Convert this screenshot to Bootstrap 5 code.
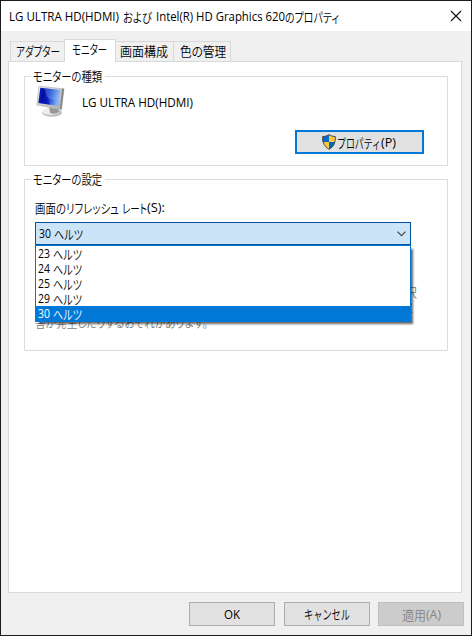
<!DOCTYPE html>
<html lang="ja">
<head>
<meta charset="utf-8">
<meta name="viewport" content="width=device-width, initial-scale=1">
<title>モニターのプロパティ</title>
<link href="https://cdn.jsdelivr.net/npm/bootstrap@5.3.0/dist/css/bootstrap.min.css" rel="stylesheet">
<style>
body{font:12px/15px "Open Sans","Noto Sans CJK JP",sans-serif;font-feature-settings:"palt";color:#000;background:#1c1a1d;overflow:hidden}
.dialog-window{width:472px;height:636px;padding:1px;background:#1c1a1d}
.dialog-face{height:634px;background:#f0f0f0}
.title-strip{height:30px;padding:0 9px 0 8px;background:#fff}
.title-strip svg{display:block}
[data-w]{display:inline-block;white-space:nowrap;transform-origin:0 50%;flex:none}
.jp{font-family:"Noto Sans CJK JP",sans-serif;font-size:13px;font-weight:350}
.tab-strip{height:30px;padding:8px 0 0 9px}
.tab-strip .nav-link{border:1px solid #d9d9d9;border-bottom:0;border-radius:0;color:#000;background:#f0f0f0;height:20px;padding:1px 0 0 5px;margin:2px 0 0;width:55px;font-size:12px;line-height:15px}
.tab-strip .nav-link.active{height:23px;margin:0 0 -1px;background:#fff;width:52px;padding:1px 0 0 7px;margin-left:-1px;position:relative}
.tab-strip .t3{width:58px;padding-left:4px;border-left:0}
.tab-strip .t4{width:57px;padding-left:6px;border-left:0}
.sheet{height:532px;width:454px;margin-left:7px;padding:14px 14px 0 15px;border:1px solid #d9d9d9;background:#fff}
.group-frame{width:424px;border:1px solid #dcdcdc}
.group-frame.kind{height:90px;margin-bottom:13px}
.group-frame.settings{height:172px;padding-left:10px}
.group-title{margin:-9px 0 1px 6px;padding:0 3px 0 2px;background:#fff;width:74px;height:15px}
.settings .group-title{margin-left:-4px}
.monitor-row{height:37px;padding-left:10px}
.monitor-row svg{margin-top:1px}
.device-name{margin:11px 0 0 15px}
.btn.win{border:1px solid #adadad;border-radius:0;background:#e1e1e1;color:#000;padding:0;width:86px;height:24px;font-size:12px;line-height:15px}
.btn.win.focus-frame{border:2px solid #0078d7;width:129px;margin:9px 23px 0 0;padding-right:2px}
.btn.win:disabled{background:#ccc;border-color:#bfbfbf;color:#838383;opacity:1}
.btn.cancel{margin:0 8px 0 9px}
.rate-label{margin:14px 0 0;height:15px;gap:3px}
.rate-combo{height:23px;width:376px;margin-top:7px;border:1px solid #005499;background:#cce4f7;padding:0 4px 0 3px}
.rate-menu{position:absolute;left:0;top:0;width:376px;height:77px;border:1px solid #0078d7;border-radius:0;background:#fff;box-shadow:3px 3px 2px -1px rgba(0,0,0,.6)}
.rate-menu .list-group-item{height:15px;padding:0 2px;border:0;background:none;color:#000;line-height:15px}
.rate-menu .list-group-item.active{background:#0078d7;color:#fff;height:16px;margin:0}
.hz{gap:3px}
.notes{padding-top:39px;width:382px;color:#7d7d7d}
.notes div{height:15px}
.footer-buttons{padding:9px 7px 0 0}
</style>
<script src="https://cdn.jsdelivr.net/npm/bootstrap@5.3.0/dist/js/bootstrap.bundle.min.js"></script>
</head>
<body>
<div class="dialog-window">
<div class="dialog-face">
  <header class="title-strip d-flex align-items-center justify-content-between">
    <div class="d-flex"><span data-w="110">LG ULTRA HD(HDMI)</span><span class="jp ms-1" data-w="29">および</span><span class="ms-1" data-w="129">Intel(R) HD Graphics 620</span><span class="jp" data-w="54">のプロパティ</span></div>
    <svg width="12" height="12" viewBox="0 0 12 12"><path d="M1 1l10 10M11 1L1 11" stroke="#111" stroke-width="1.1" fill="none"/></svg>
  </header>
  <nav class="tab-strip nav">
    <a class="nav-link"><span class="jp" data-w="44">アダプター</span></a>
    <a class="nav-link active"><span class="jp" data-w="35">モニター</span></a>
    <a class="nav-link t3"><span class="jp" data-w="48">画面構成</span></a>
    <a class="nav-link t4"><span class="jp" data-w="46">色の管理</span></a>
  </nav>
  <main class="sheet">
    <section class="group-frame kind">
      <div class="group-title"><span class="jp" data-w="69">モニターの種類</span></div>
      <div class="monitor-row d-flex align-items-start">
        <svg width="32" height="34" viewBox="0 0 32 34">
          <defs>
            <linearGradient id="scr" x1="0" y1="0" x2="1" y2=".25"><stop offset="0" stop-color="#1330b8"/><stop offset=".3" stop-color="#0310a8"/><stop offset=".55" stop-color="#1238d0"/><stop offset="1" stop-color="#85b5f5"/></linearGradient>
            <linearGradient id="rim" x1="0" y1="0" x2="1" y2="1"><stop offset="0" stop-color="#eee"/><stop offset="1" stop-color="#aaa"/></linearGradient>
          </defs>
          <ellipse cx="17" cy="27.500" rx="10" ry="4.300" fill="#bfc0c0"/>
          <ellipse cx="15.500" cy="26.500" rx="8.500" ry="3.300" fill="#ededed"/>
          <path d="M14 20l9 2 1 5q-4 3-9 1z" fill="#999"/>
          <path d="M4 1.300L29 3.800 26.500 24.500 1.800 20z" fill="url(#rim)" stroke="#b9b9b9" stroke-width=".7"/>
          <path d="M29 3.800l-2.500 20.700-1.500-.4 2-20.400z" fill="#858585"/>
          <path d="M5.300 2.800L25.500 5 23.300 21 3.400 17.900z" fill="url(#scr)"/>
          <path d="M9 3.200L25.500 5 24 15.500Q16 15.500 11 11.500z" fill="#a9d0ff" opacity=".28"/>
          <path d="M10 4.500l5 15-7-1L5 4.500z" fill="#0009a0" opacity=".5"/>
        </svg>
        <span class="device-name" data-w="111">LG ULTRA HD(HDMI)</span>
      </div>
      <div class="d-flex justify-content-end">
        <button class="btn win focus-frame d-flex align-items-center justify-content-center" type="button">
          <svg width="16" height="16" viewBox="0 0 16 16"><path d="M8 .5Q11 2.500 14.500 2.500 15 11.500 8 15.500 1 11.500 1.500 2.500 5 2.500 8 .5z" fill="#ffc83d"/><path d="M8 .5V8H1.600Q1.300 5 1.500 2.500 5 2.500 8 .5zM8 8h6.300Q13.300 12.500 8 15.500z" fill="#0067c5"/><path d="M8 .8Q11 2.600 14.400 2.600 14.800 11.500 8 15.300 1.200 11.500 1.600 2.600 5 2.600 8 .8z" fill="none" stroke="#47515d"/></svg>
          <span class="jp" data-w="44">プロパティ</span><span data-w="15">(P)</span>
        </button>
      </div>
    </section>
    <section class="group-frame settings">
      <div class="group-title"><span class="jp" data-w="69">モニターの設定</span></div>
      <div class="rate-label d-flex"><span class="jp" data-w="84">画面のリフレッシュ</span><span class="d-flex"><span class="jp" data-w="25">レート</span><span data-w="18">(S):</span></span></div>
      <div class="rate-combo d-flex align-items-center justify-content-between">
        <div class="d-flex hz"><span data-w="12">30</span><span class="jp" data-w="29">ヘルツ</span></div>
        <svg width="9" height="6" viewBox="0 0 9 6"><path d="M.5.7l4 4 4-4" fill="none" stroke="#444" stroke-width="1.200"/></svg>
      </div>
      <div class="position-relative">
        <div class="notes">
          <div class="d-flex justify-content-end"><span class="jp">択</span></div>
          <div class="d-flex justify-content-end pe-1"><span class="jp">に</span></div>
          <div><span class="jp" data-w="173">害が発生したりするおそれがあります。</span></div>
        </div>
        <div class="rate-menu list-group">
          <div class="list-group-item d-flex hz"><span data-w="12">23</span><span class="jp" data-w="29">ヘルツ</span></div>
          <div class="list-group-item d-flex hz"><span data-w="12">24</span><span class="jp" data-w="29">ヘルツ</span></div>
          <div class="list-group-item d-flex hz"><span data-w="12">25</span><span class="jp" data-w="29">ヘルツ</span></div>
          <div class="list-group-item d-flex hz"><span data-w="12">29</span><span class="jp" data-w="29">ヘルツ</span></div>
          <div class="list-group-item active d-flex hz"><span data-w="12">30</span><span class="jp" data-w="29">ヘルツ</span></div>
        </div>
      </div>
    </section>
  </main>
  <footer class="footer-buttons d-flex justify-content-end">
    <button class="btn win" type="button"><span data-w="16">OK</span></button>
    <button class="btn win cancel" type="button"><span class="jp" data-w="46">キャンセル</span></button>
    <button class="btn win d-flex align-items-center justify-content-center" type="button" disabled><span class="jp" data-w="24">適用</span><span data-w="15">(A)</span></button>
  </footer>
</div>
</div>
<script>
// Condense each label to its intended UI width.
document.querySelectorAll('[data-w]').forEach(function (el) {
  var natural = el.getBoundingClientRect().width, wanted = +el.dataset.w;
  el.style.transform = 'scaleX(' + wanted / natural + ')';
  el.style.marginRight = (wanted - natural) + 'px';
});
</script>
</body>
</html>
